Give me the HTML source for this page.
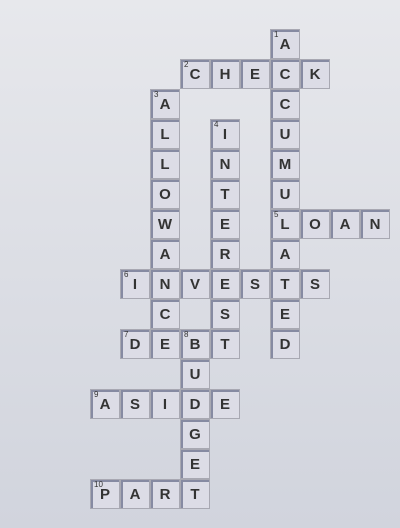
<!DOCTYPE html>
<html><head><style>
html,body{margin:0;padding:0}
body{width:400px;height:528px;background:linear-gradient(#e7e8ec,#d1d4dd);position:relative;overflow:hidden;font-family:"Liberation Sans",sans-serif}
.c{position:absolute;width:30px;height:30px;box-sizing:border-box;background:#dcdce6;border:1px solid #a8a8b2;box-shadow:inset 2px 2px 0 #868aa2;font-size:15px;color:#333;text-align:center;line-height:29px;font-weight:bold}
.c i{position:absolute;left:3px;top:1px;font-size:8px;line-height:8px;font-style:normal;font-weight:normal;color:#333}
</style></head><body>
<div id="g"></div>
<script></script>
<div class="c" style="left:270px;top:29px"><i>1</i>A</div>
<div class="c" style="left:180px;top:59px"><i>2</i>C</div>
<div class="c" style="left:210px;top:59px">H</div>
<div class="c" style="left:240px;top:59px">E</div>
<div class="c" style="left:270px;top:59px">C</div>
<div class="c" style="left:300px;top:59px">K</div>
<div class="c" style="left:150px;top:89px"><i>3</i>A</div>
<div class="c" style="left:270px;top:89px">C</div>
<div class="c" style="left:150px;top:119px">L</div>
<div class="c" style="left:210px;top:119px"><i>4</i>I</div>
<div class="c" style="left:270px;top:119px">U</div>
<div class="c" style="left:150px;top:149px">L</div>
<div class="c" style="left:210px;top:149px">N</div>
<div class="c" style="left:270px;top:149px">M</div>
<div class="c" style="left:150px;top:179px">O</div>
<div class="c" style="left:210px;top:179px">T</div>
<div class="c" style="left:270px;top:179px">U</div>
<div class="c" style="left:150px;top:209px">W</div>
<div class="c" style="left:210px;top:209px">E</div>
<div class="c" style="left:270px;top:209px"><i>5</i>L</div>
<div class="c" style="left:300px;top:209px">O</div>
<div class="c" style="left:330px;top:209px">A</div>
<div class="c" style="left:360px;top:209px">N</div>
<div class="c" style="left:150px;top:239px">A</div>
<div class="c" style="left:210px;top:239px">R</div>
<div class="c" style="left:270px;top:239px">A</div>
<div class="c" style="left:120px;top:269px"><i>6</i>I</div>
<div class="c" style="left:150px;top:269px">N</div>
<div class="c" style="left:180px;top:269px">V</div>
<div class="c" style="left:210px;top:269px">E</div>
<div class="c" style="left:240px;top:269px">S</div>
<div class="c" style="left:270px;top:269px">T</div>
<div class="c" style="left:300px;top:269px">S</div>
<div class="c" style="left:150px;top:299px">C</div>
<div class="c" style="left:210px;top:299px">S</div>
<div class="c" style="left:270px;top:299px">E</div>
<div class="c" style="left:120px;top:329px"><i>7</i>D</div>
<div class="c" style="left:150px;top:329px">E</div>
<div class="c" style="left:180px;top:329px"><i>8</i>B</div>
<div class="c" style="left:210px;top:329px">T</div>
<div class="c" style="left:270px;top:329px">D</div>
<div class="c" style="left:180px;top:359px">U</div>
<div class="c" style="left:90px;top:389px"><i>9</i>A</div>
<div class="c" style="left:120px;top:389px">S</div>
<div class="c" style="left:150px;top:389px">I</div>
<div class="c" style="left:180px;top:389px">D</div>
<div class="c" style="left:210px;top:389px">E</div>
<div class="c" style="left:180px;top:419px">G</div>
<div class="c" style="left:180px;top:449px">E</div>
<div class="c" style="left:90px;top:479px"><i>10</i>P</div>
<div class="c" style="left:120px;top:479px">A</div>
<div class="c" style="left:150px;top:479px">R</div>
<div class="c" style="left:180px;top:479px">T</div>
</body></html>
